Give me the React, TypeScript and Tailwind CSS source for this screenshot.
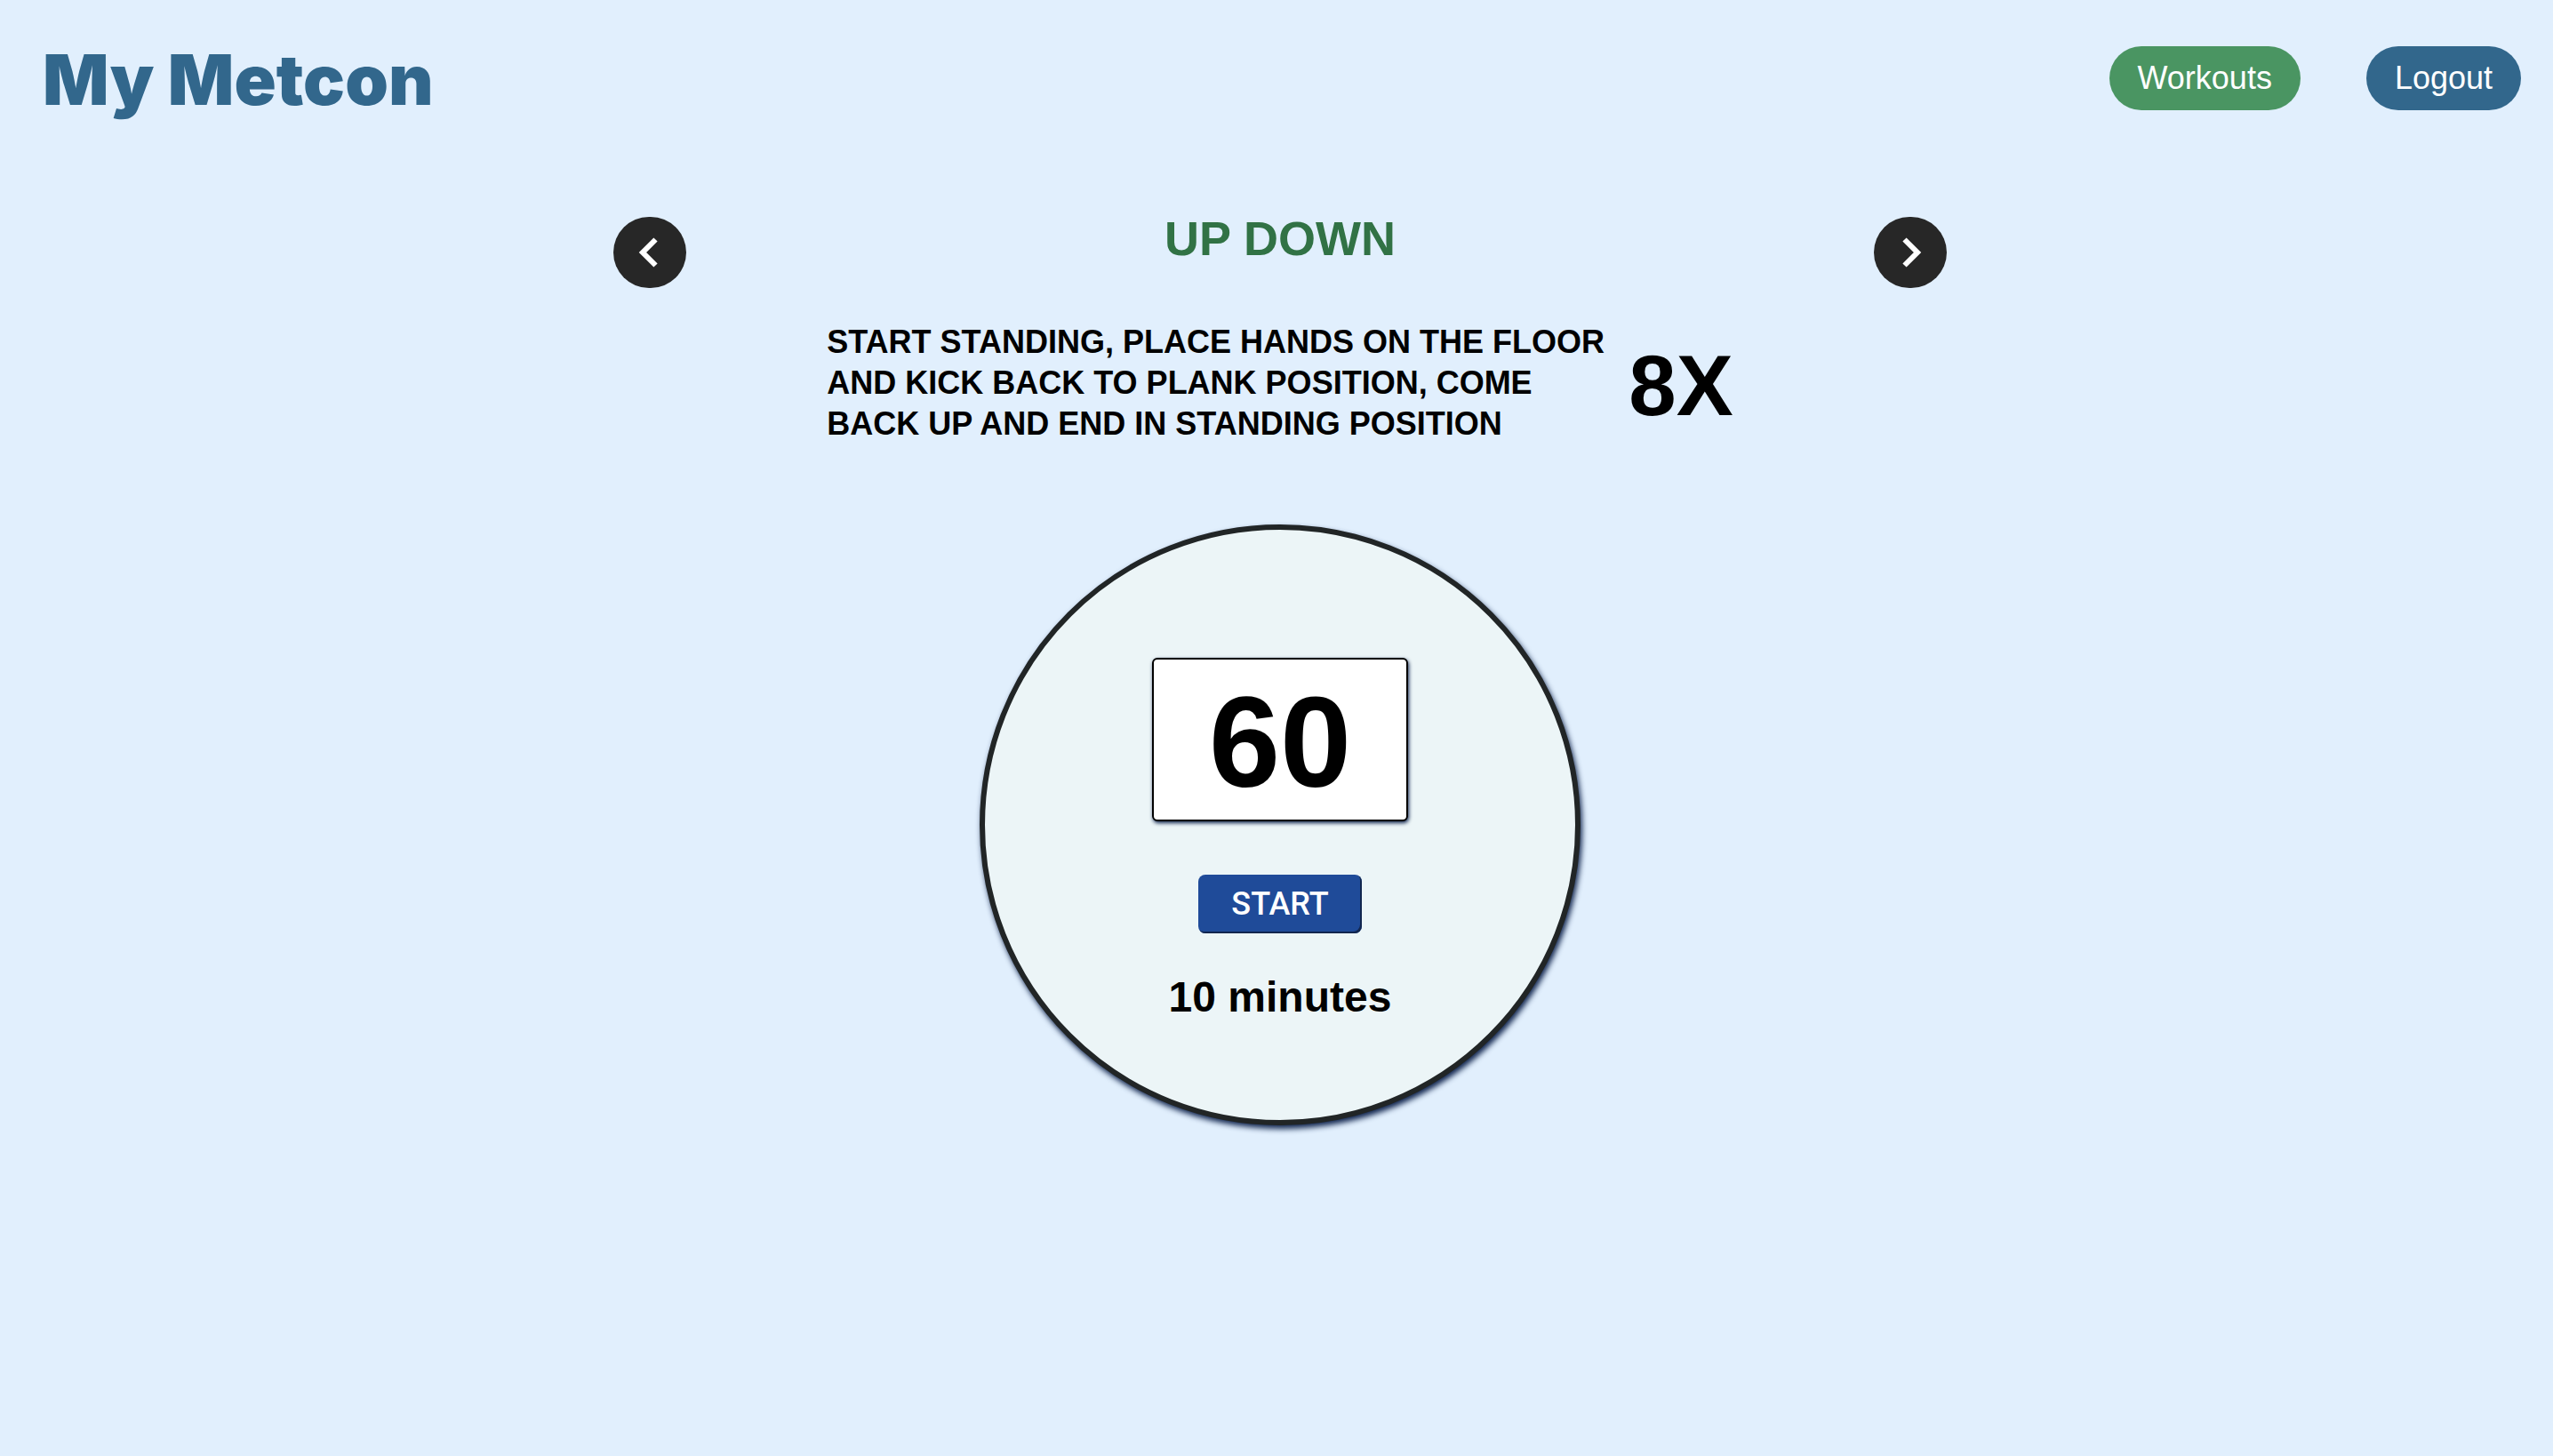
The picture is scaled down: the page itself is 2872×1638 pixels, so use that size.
function Header() {
  return (
    <header className="flex items-start justify-between pl-12 pr-9 pt-[42px]">
      <h1 className="font-['Inter',sans-serif] text-[78px] leading-[96px] font-black text-[#32678c]">
        My Metcon
      </h1>
      <nav className="mt-2.5 flex gap-[74px]">
        <a
          href="#workouts"
          className="flex h-[72px] items-center rounded-full bg-[#4a9562] px-8 text-[36px] text-white"
        >
          Workouts
        </a>
        <button
          type="button"
          className="flex h-[72px] items-center rounded-full bg-[#32678c] px-8 text-[36px] text-white"
        >
          Logout
        </button>
      </nav>
    </header>
  );
}

function Chevron({ points }: { points: string }) {
  return (
    <svg viewBox="0 0 24 36" className="h-9 w-6" fill="none" aria-hidden="true">
      <polyline points={points} stroke="currentColor" strokeWidth="6" />
    </svg>
  );
}

function Exercise() {
  return (
    <section className="flex w-full max-w-[1500px] items-start justify-between">
      <button
        type="button"
        aria-label="Previous exercise"
        className="mt-2 flex h-20 w-[82px] items-center justify-center rounded-full bg-[#272727] pr-1 text-white"
      >
        <Chevron points="20.5,3.5 6,18 20.5,32.5" />
      </button>
      <div className="flex flex-col items-center">
        <h2 className="text-[54px] leading-[64px] font-bold text-[#317245]">UP DOWN</h2>
        <div className="mt-[62px] flex items-center gap-4 font-bold text-black">
          <p className="w-[886px] text-[36px] leading-[46px]">
            START STANDING, PLACE HANDS ON THE FLOOR AND KICK BACK TO PLANK POSITION, COME BACK UP
            AND END IN STANDING POSITION
          </p>
          <p className="mt-1.5 text-[96px] leading-[96px]">8X</p>
        </div>
      </div>
      <button
        type="button"
        aria-label="Next exercise"
        className="mt-2 flex h-20 w-[82px] items-center justify-center rounded-full bg-[#272727] pl-1 text-white"
      >
        <Chevron points="3.5,3.5 18,18 3.5,32.5" />
      </button>
    </section>
  );
}

function Timer() {
  return (
    <section className="mt-[90px] flex aspect-square w-[676px] flex-col items-center rounded-full border-[6px] border-[#212526] bg-[#ecf5f7] pt-36 font-bold text-black shadow-[2px_4px_6px_#12264f]">
      <div className="flex h-[184px] w-[288px] items-center justify-center rounded-md border-2 border-black bg-white pt-2 text-[144px] leading-[144px] shadow-[1px_2px_4px_#12264f]">
        60
      </div>
      <button
        type="button"
        className="mt-[60px] h-[66px] w-[184px] rounded-lg bg-[#1f4b99] font-['Roboto',sans-serif] text-[36px] font-medium text-white shadow-[inset_-2px_-2px_0_#12264f]"
      >
        START
      </button>
      <p className="mt-11 text-[48px] leading-[56px]">10 minutes</p>
    </section>
  );
}

export default function App() {
  return (
    <div className="min-h-screen bg-[#e1effd] font-['Liberation_Sans',Arial,sans-serif]">
      <Header />
      <main className="mt-[98px] flex flex-col items-center pb-16 pl-2">
        <Exercise />
        <Timer />
      </main>
    </div>
  );
}
